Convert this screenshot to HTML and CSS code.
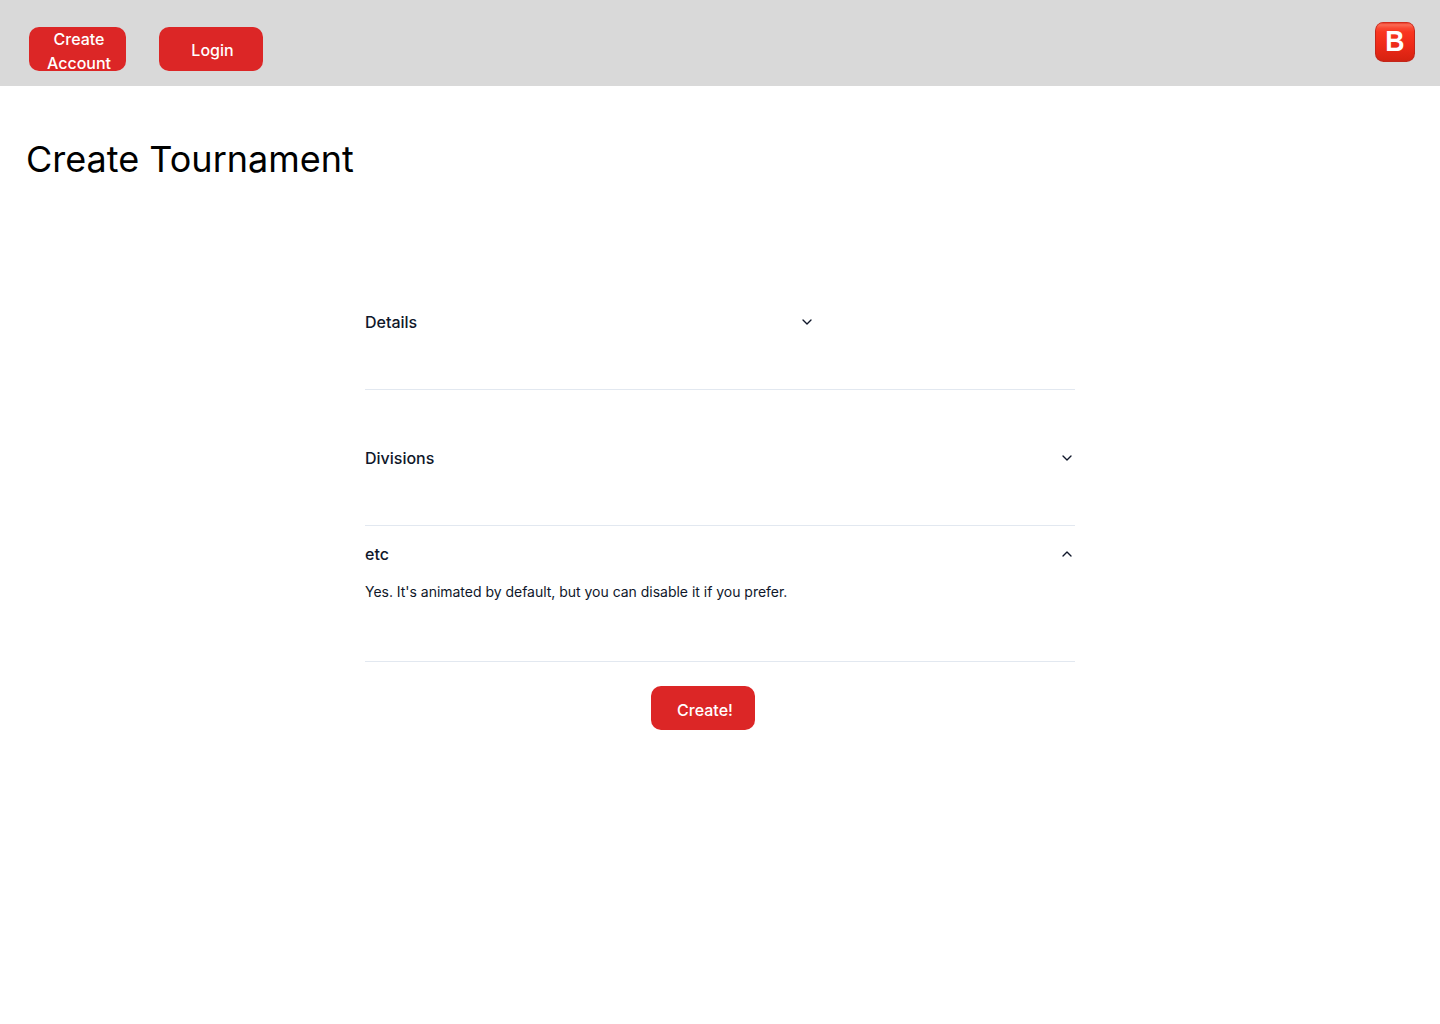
FILE: index.html
```html
<!DOCTYPE html>
<html lang="en">
<head>
<meta charset="utf-8">
<title>Create Tournament</title>
<link rel="stylesheet" href="styles.css">
</head>
<body>
<header class="topbar">
  <nav class="actions">
    <button class="btn btn-account">Create Account</button>
    <button class="btn btn-login">Login</button>
  </nav>
  <svg class="logo" viewBox="0 0 40 40" role="img" aria-label="B">
    <defs>
      <linearGradient id="face" x1="0" y1="0" x2="0" y2="1">
        <stop offset="0" stop-color="#e2321f"/>
        <stop offset=".06" stop-color="#fb6a54"/>
        <stop offset=".15" stop-color="#f94832"/>
        <stop offset=".25" stop-color="#f93620"/>
        <stop offset=".6" stop-color="#ee2a18"/>
        <stop offset="1" stop-color="#d62210"/>
      </linearGradient>
    </defs>
    <rect width="40" height="40" rx="8.5" fill="#c4261a"/>
    <rect x="1" y=".5" width="38" height="38" rx="7.5" fill="url(#face)"/>
    <text class="logo-letter" transform="translate(20 29.4) scale(.92 1)" text-anchor="middle">B</text>
  </svg>
</header>
<main class="page">
  <h1 class="title">Create Tournament</h1>
  <div class="form">
    <section class="item">
      <div class="trigger trigger-short"><span>Details</span>
        <svg class="chevron" viewBox="0 0 16 16"><path d="M4 6l4 4 4-4"/></svg></div>
    </section>
    <section class="item">
      <div class="trigger"><span>Divisions</span>
        <svg class="chevron" viewBox="0 0 16 16"><path d="M4 6l4 4 4-4"/></svg></div>
    </section>
    <section class="item item-open">
      <div class="trigger"><span>etc</span>
        <svg class="chevron" viewBox="0 0 16 16"><path d="M12 10L8 6l-4 4"/></svg></div>
      <p class="answer">Yes. It's animated by default, but you can disable it if you prefer.</p>
    </section>
    <button class="btn btn-create">Create!</button>
  </div>
</main>
</body>
</html>
```
FILE: styles.css
```css
* { box-sizing: border-box; }
body { margin: 0; min-height: 1024px; background: #fff; color: #0f172a; font-family: Inter, sans-serif; }
.topbar { display: flex; justify-content: space-between; height: 86px; padding: 22px 25px 0 29px; background: #d9d9d9; }
.actions { display: flex; gap: 33px; padding-top: 5px; }
.btn { display: flex; align-items: center; justify-content: center; height: 44px; padding: 0; border: 0; border-radius: 10px; background: #dc2626; color: #fff; font: 500 16px/24px Inter, sans-serif; text-align: center; }
.btn-account { width: 97px; padding: 3px 14px 0 17px; }
.btn-login { width: 104px; padding: 1px 0 0 3px; }
.logo { width: 40px; height: 40px; }
.logo-letter { fill: #fff; font: 700 29px "Liberation Sans", sans-serif; }
.title { margin: 0; padding: 49px 26px 0; color: #000; font-size: 36px; font-weight: 400; line-height: 48px; }
.form { width: 710px; margin: 71px auto 0; }
.item { height: 136px; padding-top: 56px; border-bottom: 1px solid #e2e8f0; }
.item-open { padding-top: 16px; }
.trigger { display: flex; align-items: center; justify-content: space-between; height: 24px; font-size: 16px; font-weight: 500; line-height: 24px; }
.trigger-short { width: 450px; }
.chevron { width: 16px; height: 16px; fill: none; stroke: #0f172a; stroke-width: 1.33; stroke-linecap: round; stroke-linejoin: round; }
.answer { margin: 16px 0 0; font-size: 14px; line-height: 20px; letter-spacing: -0.02px; }
.btn-create { width: 104px; margin: 24px 0 0 286px; padding: 4px 0 0 4px; }
```
